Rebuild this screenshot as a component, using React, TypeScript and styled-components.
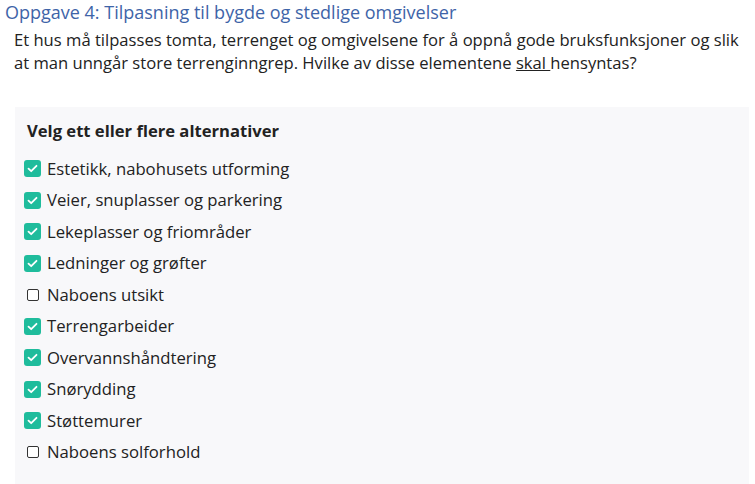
import React from "react";
import styled, { createGlobalStyle } from "styled-components";

const GlobalStyle = createGlobalStyle`
  body {
    margin: 0;
    background: #fff;
    font-family: "Open Sans", "Noto Sans", sans-serif;
    color: #222;
  }
`;

const Page = styled.div`
  width: 755px;
  height: 484px;
  overflow: hidden;
`;

const Title = styled.h2`
  margin: 0;
  padding: 0 0 0 5px;
  font-size: 18px;
  line-height: 25px;
  font-weight: 400;
  color: #3e64a8;
`;

const Intro = styled.p`
  margin: 3px 0 0;
  padding-left: 14px;
  width: 735px;
  font-size: 16.6px;
  line-height: 23px;
  color: #222;
`;

const Underlined = styled.span`
  text-decoration: underline;
`;

const Panel = styled.div`
  margin: 33px 6px 0 15px;
  background: #f8f8fa;
  padding: 12px 0 24px 8px;
`;

const Legend = styled.div`
  font-weight: 700;
  font-size: 16.6px;
  line-height: 24px;
  color: #222;
  margin: 0 0 10px 4px;
`;

const List = styled.ul`
  list-style: none;
  margin: 0;
  padding: 0;
  display: flex;
  flex-direction: column;
`;

const Row = styled.li`
  display: flex;
  align-items: center;
  height: 31.5px;
  gap: 5px;
`;

const BoxSlot = styled.span`
  width: 19px;
  display: flex;
  justify-content: center;
`;

const CheckedBox = styled.span`
  width: 17px;
  height: 17px;
  border-radius: 3px;
  background: #1fbc9c;
  display: flex;
  align-items: center;
  justify-content: center;
`;

const EmptyBox = styled.span`
  width: 10px;
  height: 10px;
  border: 1.5px solid #333;
  border-radius: 2px;
  background: #fff;
`;

const Label = styled.span`
  font-size: 16.7px;
  line-height: 24px;
  color: #222;
`;

const items: { label: string; checked: boolean }[] = [
  { label: "Estetikk, nabohusets utforming", checked: true },
  { label: "Veier, snuplasser og parkering", checked: true },
  { label: "Lekeplasser og friområder", checked: true },
  { label: "Ledninger og grøfter", checked: true },
  { label: "Naboens utsikt", checked: false },
  { label: "Terrengarbeider", checked: true },
  { label: "Overvannshåndtering", checked: true },
  { label: "Snørydding", checked: true },
  { label: "Støttemurer", checked: true },
  { label: "Naboens solforhold", checked: false },
];

const Check = () => (
  <svg width="11" height="9" viewBox="0 0 11 9">
    <path d="M1.5 4.6 L4.2 7.2 L9.5 1.8" fill="none" stroke="#fff" strokeWidth="1.8" strokeLinecap="round" strokeLinejoin="round" />
  </svg>
);

const App = () => (
  <Page>
    <GlobalStyle />
    <Title>Oppgave 4: Tilpasning til bygde og stedlige omgivelser</Title>
    <Intro>
      Et hus må tilpasses tomta, terrenget og omgivelsene for å oppnå gode bruksfunksjoner og slik<br />
      at man unngår store terrenginngrep. Hvilke av disse elementene <Underlined>skal </Underlined>hensyntas?
    </Intro>
    <Panel>
      <Legend>Velg ett eller flere alternativer</Legend>
      <List>
        {items.map((it) => (
          <Row key={it.label}>
            <BoxSlot>{it.checked ? <CheckedBox><Check /></CheckedBox> : <EmptyBox />}</BoxSlot>
            <Label>{it.label}</Label>
          </Row>
        ))}
      </List>
    </Panel>
  </Page>
);

export default App;
